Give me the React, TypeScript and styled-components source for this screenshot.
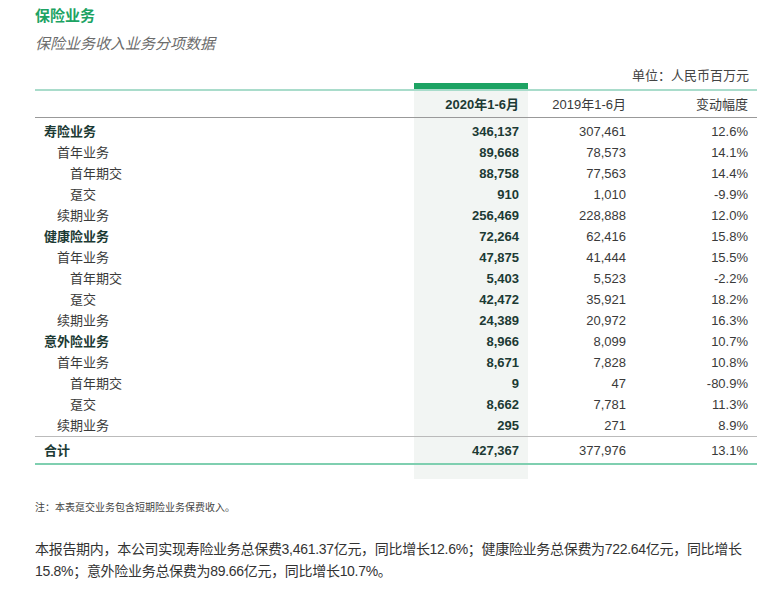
import styled, { createGlobalStyle } from 'styled-components';

const Global = createGlobalStyle`
  body { margin: 0; background: #fff; font-family: "Liberation Sans", "Noto Sans CJK SC", sans-serif; color: #333; }
`;

const Page = styled.div`
  width: 783px;
  padding: 6px 26px 0 35px;
  box-sizing: border-box;
`;

const Title = styled.div`
  color: #1da363;
  font-size: 15px;
  font-weight: bold;
  line-height: 20px;
`;

const Subtitle = styled.div`
  color: #6b6b6b;
  font-size: 15px;
  font-style: italic;
  margin-top: 8px;
  line-height: 20px;
`;

const Unit = styled.div`
  text-align: right;
  font-size: 13px;
  color: #444;
  margin-top: 14px;
  padding-right: 8px;
  line-height: 16px;
`;

const Table = styled.table`
  width: 100%;
  border-collapse: collapse;
  margin-top: 5px;
  font-size: 13px;
  border-top: 2px solid #a9dccb;
  border-bottom: 2px solid #7fcfb0;
`;

const Cell = styled.td<{ $hl?: boolean; $bold?: boolean; $indent?: number }>`
  height: 21px;
  padding: 0 9px 0 ${p => 9 + (p.$indent ?? 0) * 13}px;
  text-align: ${p => (p.$indent !== undefined ? 'left' : 'right')};
  background: ${p => (p.$hl ? '#f2f5f3' : 'transparent')};
  font-weight: ${p => (p.$bold ? 'bold' : 'normal')};
  color: ${p => (p.$bold ? '#1c3a34' : '#3a3a3a')};
  white-space: nowrap;
  line-height: 21px;
`;

const HeadCell = styled(Cell)`
  height: 26px;
  border-bottom: 1px solid #999;
  position: relative;
`;

const FirstRow = styled.tr`
  td {
    padding-top: 3px;
  }
`;

const GreenBar = styled.div`
  position: absolute;
  left: 0;
  right: 0;
  top: -8px;
  height: 6px;
  background: #1da363;
`;

const TotalRow = styled.tr`
  td {
    border-top: 1px solid #bbb;
    height: 26px;
  }
`;

const Tail = styled.div`
  display: flex;
`;

const TailSpacer = styled.div<{ $w: number; $hl?: boolean }>`
  width: ${p => p.$w}px;
  height: 14px;
  background: ${p => (p.$hl ? '#f2f5f3' : 'transparent')};
`;

const Note = styled.div`
  font-size: 10px;
  color: #444;
  margin-top: 20px;
`;

const Para = styled.p`
  font-size: 14px;
  line-height: 22px;
  letter-spacing: -0.3px;
  color: #333;
  margin: 24px 0 0;
`;

const rows: [string, number, string, string, string][] = [
  ['寿险业务', 0, '346,137', '307,461', '12.6%'],
  ['首年业务', 1, '89,668', '78,573', '14.1%'],
  ['首年期交', 2, '88,758', '77,563', '14.4%'],
  ['趸交', 2, '910', '1,010', '-9.9%'],
  ['续期业务', 1, '256,469', '228,888', '12.0%'],
  ['健康险业务', 0, '72,264', '62,416', '15.8%'],
  ['首年业务', 1, '47,875', '41,444', '15.5%'],
  ['首年期交', 2, '5,403', '5,523', '-2.2%'],
  ['趸交', 2, '42,472', '35,921', '18.2%'],
  ['续期业务', 1, '24,389', '20,972', '16.3%'],
  ['意外险业务', 0, '8,966', '8,099', '10.7%'],
  ['首年业务', 1, '8,671', '7,828', '10.8%'],
  ['首年期交', 2, '9', '47', '-80.9%'],
  ['趸交', 2, '8,662', '7,781', '11.3%'],
  ['续期业务', 1, '295', '271', '8.9%'],
];

export default function App() {
  return (
    <Page>
      <Global />
      <Title>保险业务</Title>
      <Subtitle>保险业务收入业务分项数据</Subtitle>
      <Unit>单位：人民币百万元</Unit>
      <Table>
        <colgroup>
          <col style={{ width: 379 }} />
          <col style={{ width: 114 }} />
          <col style={{ width: 107 }} />
          <col />
        </colgroup>
        <thead>
          <tr>
            <HeadCell />
            <HeadCell $hl $bold>
              <GreenBar />
              2020年1-6月
            </HeadCell>
            <HeadCell>2019年1-6月</HeadCell>
            <HeadCell>变动幅度</HeadCell>
          </tr>
        </thead>
        <tbody>
          {rows.map(([label, lvl, a, b, c], i) => {
            const Row = i === 0 ? FirstRow : 'tr';
            return (
              <Row key={i}>
                <Cell $indent={lvl} $bold={lvl === 0}>{label}</Cell>
                <Cell $hl $bold>{a}</Cell>
                <Cell>{b}</Cell>
                <Cell>{c}</Cell>
              </Row>
            );
          })}
          <TotalRow>
            <Cell $indent={0} $bold>合计</Cell>
            <Cell $hl $bold>427,367</Cell>
            <Cell>377,976</Cell>
            <Cell>13.1%</Cell>
          </TotalRow>
        </tbody>
      </Table>
      <Tail>
        <TailSpacer $w={379} />
        <TailSpacer $w={114} $hl />
      </Tail>
      <Note>注：本表趸交业务包含短期险业务保费收入。</Note>
      <Para>
        本报告期内，本公司实现寿险业务总保费3,461.37亿元，同比增长12.6%；健康险业务总保费为722.64亿元，同比增长15.8%；意外险业务总保费为89.66亿元，同比增长10.7%。
      </Para>
    </Page>
  );
}
